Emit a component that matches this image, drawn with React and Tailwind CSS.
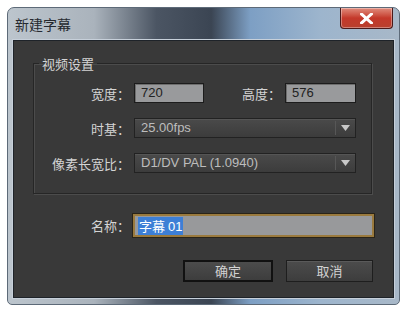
import React from "react";

const font = { fontFamily: '"Noto Sans CJK SC", "Liberation Sans", sans-serif' };

const Label = ({ children, w = "w-[100px]" }) => (
  <span className={`${w} shrink-0 pr-[4px] text-right text-[13px] leading-none text-[#d4d4d4]`}>
    {children}
  </span>
);

const TextBox = ({ value, w }) => (
  <div
    className={`${w} h-[20px] flex items-center pl-[6px] border border-[#1c1c1c] bg-[#999a9c] text-[13px] text-[#222] shadow-[inset_1px_1px_0_#6e6e6e]`}
    style={{ fontFamily: '"Liberation Sans", sans-serif' }}
  >
    {value}
  </div>
);

const Select = ({ value }) => (
  <div className="w-[222px] h-[20px] flex items-center border border-[#222] bg-gradient-to-b from-[#4a4a4a] to-[#3c3c3c] shadow-[inset_0_1px_0_#555]">
    <span
      className="flex-1 pl-[6px] text-[13px] text-[#bdbdbd]"
      style={{ fontFamily: '"Liberation Sans", sans-serif' }}
    >
      {value}
    </span>
    <div className="w-[1px] h-[14px] bg-[#2a2a2a] border-r border-[#575757]" />
    <div className="w-[19px] flex items-center justify-center">
      <svg width="9" height="6" viewBox="0 0 9 6">
        <path d="M0 0 L9 0 L4.5 6 Z" fill="#c8c8c8" />
      </svg>
    </div>
  </div>
);

const Button = ({ children, focused }) => (
  <div
    className={`h-[22px] flex items-center justify-center text-[13px] text-[#d2d2d2] bg-gradient-to-b from-[#4c4c4c] to-[#3d3d3d] ${
      focused
        ? "w-[90px] border-2 border-[#111]"
        : "w-[87px] border border-[#1e1e1e] shadow-[inset_0_1px_0_#5a5a5a]"
    }`}
  >
    {children}
  </div>
);

export default function App() {
  return (
    <div className="w-[407px] h-[312px] bg-white p-[7px]" style={font}>
      <div className="w-full h-full flex flex-col rounded-t-[7px] rounded-b-[5px] border border-[#5d6a78] bg-[linear-gradient(90deg,#bcc5cd_0%,#aab3bc_22%,#4b5563_38%,#3b4553_52%,#7d9fc4_62%,#9db5cd_80%,#a8b8c8_100%)] overflow-hidden">
        <div className="h-[32px] flex items-start shrink-0">
          <span className="pl-[7px] pt-[6px] text-[14px] text-[#262a30]">新建字幕</span>
          <div className="ml-auto mr-[6px] w-[53px] h-[21px] flex items-center justify-center rounded-b-[4px] border border-t-0 border-[#4a1a1a] bg-gradient-to-b from-[#e08a7c] via-[#c4382a] to-[#b8402e] shadow-[inset_0_0_0_1px_rgba(255,255,255,0.35)]">
            <svg width="13" height="11" viewBox="0 0 13 11">
              <path d="M1.5 1 L11.5 10 M11.5 1 L1.5 10" stroke="#fff" strokeWidth="3" strokeLinecap="square" />
            </svg>
          </div>
        </div>
        <div className="mx-[5px] mb-[6px] flex-1 border border-[#1e2329] shadow-[0_0_0_1px_#c7d0da] bg-[#393939] flex flex-col">
          <fieldset className="ml-[19px] mt-[16px] w-[339px] h-[137px] border border-[#262626] shadow-[1px_1px_0_#4c4c4c,inset_1px_1px_0_#4c4c4c] px-0 pb-0 flex flex-col">
            <legend className="ml-[5px] px-[3px] text-[13px] leading-none text-[#d4d4d4]">视频设置</legend>
            <div className="mt-[13px] flex items-center">
              <Label>宽度：</Label>
              <TextBox value="720" w="w-[70px]" />
              <Label w="w-[81px]">高度：</Label>
              <TextBox value="576" w="w-[71px]" />
            </div>
            <div className="mt-[15px] flex items-center">
              <Label>时基：</Label>
              <Select value="25.00fps" />
            </div>
            <div className="mt-[15px] flex items-center">
              <Label>像素长宽比：</Label>
              <Select value="D1/DV PAL (1.0940)" />
            </div>
          </fieldset>
          <div className="mt-[20px] flex items-center">
            <span className="w-[119px] pr-[3px] text-right text-[13px] text-[#d4d4d4]">名称：</span>
            <div className="w-[241px] h-[23px] flex items-center pl-[3px] border-2 border-[#9a7a3e] bg-[#98999b] shadow-[0_0_0_1px_#2a2418]">
              <span className="bg-[#3d7fd6] text-white text-[13px] leading-[17px] px-[1px]">
                字幕 <span style={{ fontFamily: '"Liberation Sans", sans-serif' }}>01</span>
              </span>
            </div>
          </div>
          <div className="mt-[23px] flex items-center">
            <div className="ml-[169px]">
              <Button focused>确定</Button>
            </div>
            <div className="ml-[13px]">
              <Button>取消</Button>
            </div>
          </div>
        </div>
      </div>
    </div>
  );
}
